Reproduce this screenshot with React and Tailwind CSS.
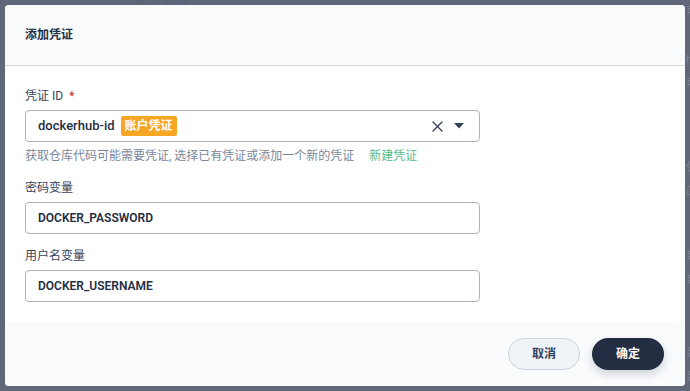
import React from "react";

const font = { fontFamily: 'Roboto, "Noto Sans CJK SC", "Noto Sans", sans-serif' };

function Field({ label, required, children }) {
  return (
    <div className="flex flex-col">
      <div className="h-[20px] leading-[20px] text-[12px] text-[#36435c] flex items-center">
        <span>{label}</span>
        {required && <span className="ml-[6px] text-[#ca2621]">*</span>}
      </div>
      <div className="mt-[4px]">{children}</div>
    </div>
  );
}

function TextInput({ value }) {
  return (
    <div className="w-[455px] h-[32px] rounded-[4px] border border-[#abb3c0] bg-white flex items-center px-[12px] text-[12px] font-semibold text-[#242e42]">
      {value}
    </div>
  );
}

export default function App() {
  return (
    <div style={font} className="w-[690px] h-[391px] bg-[#5f6778] overflow-hidden relative">
      {/* faint background content */}
      <div className="absolute top-[-11px] left-[133px] text-[14px] text-[#56647c]">提示篇幕</div>
      <div className="absolute top-0 left-[102px] w-px h-[5px] bg-[#55707a]" />
      <div className="absolute top-0 left-[686px] flex flex-col text-[11px] text-[#7d8596] leading-[24px]">
        <span>可</span>
        <span className="mt-[24px]">h</span>
        <span>可</span>
        <span className="mt-[60px]">保</span>
        <span>口</span>
        <span className="mt-[40px]">自</span>
        <span>自</span>
        <span className="mt-[50px]">呆</span>
        <span>呆</span>
        <span className="mt-[30px]">自</span>
      </div>

      <div className="pt-[5px] pl-[5px]">
        <div className="w-[680px] h-[381px] rounded-[4px] bg-white overflow-hidden flex flex-col relative">
          {/* header */}
          <div className="h-[61px] shrink-0 bg-[#f9fbfd] border-b border-[#d1d7df] flex items-center px-[20px]">
            <span className="text-[12px] font-semibold text-[#242e42]">添加凭证</span>
          </div>

          {/* body */}
          <div className="flex-1 px-[20px] pt-[20px] pb-[20px] flex flex-col">
            <Field label="凭证 ID" required>
              <div className="w-[455px] h-[32px] rounded-[4px] border border-[#abb3c0] bg-white flex items-center pl-[12px] pr-[15px]">
                <span className="text-[13px] font-medium text-[#242e42]">dockerhub-id</span>
                <span className="ml-[6px] h-[20px] px-[4px] rounded-[2px] bg-[#f5a623] text-white text-[12px] font-bold leading-[20px]">
                  账户凭证
                </span>
                <div className="flex-1" />
                <svg width="11" height="11" viewBox="0 0 11 11" className="mr-[11px]">
                  <path d="M1 1 L10 10 M10 1 L1 10" stroke="#36435c" strokeWidth="1.4" strokeLinecap="round" />
                </svg>
                <svg width="10" height="6" viewBox="0 0 10 6">
                  <path d="M0 0 H10 L5 5.5 Z" fill="#36435c" />
                </svg>
              </div>
            </Field>
            <div className="mt-[4px] h-[20px] leading-[20px] text-[12px] text-[#79879c] flex">
              <span>获取仓库代码可能需要凭证, 选择已有凭证或添加一个新的凭证</span>
              <span className="ml-[15px] text-[#55bc8a]">新建凭证</span>
            </div>

            <div className="mt-[12px]">
              <Field label="密码变量">
                <TextInput value="DOCKER_PASSWORD" />
              </Field>
            </div>
            <div className="mt-[12px]">
              <Field label="用户名变量">
                <TextInput value="DOCKER_USERNAME" />
              </Field>
            </div>
          </div>

          {/* footer */}
          <div className="h-[64px] shrink-0 bg-[#f9fbfd] flex items-start justify-end pt-[16px] pr-[21px] gap-[12px]">
            <button className="w-[72px] h-[32px] rounded-full border border-[#ccd3db] bg-[#eff4f9] text-[12px] font-bold text-[#36435c]">
              取消
            </button>
            <button className="w-[72px] h-[32px] rounded-full bg-[#242e42] text-[12px] font-bold text-white shadow-[0_4px_8px_rgba(36,46,66,0.2)]">
              确定
            </button>
          </div>
        </div>
      </div>
    </div>
  );
}
